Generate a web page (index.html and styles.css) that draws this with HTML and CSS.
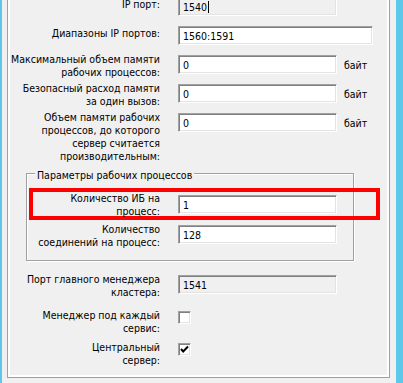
FILE: index.html
```html
<!DOCTYPE html>
<html lang="ru">
<head>
<meta charset="utf-8">
<link rel="stylesheet" href="styles.css">
</head>
<body>
<div class="strip-left"></div>
<div class="panel">
  <div class="form">
    <div class="row">
      <div class="label single">IP порт:</div>
      <div class="tb tb-disabled"><span class="caret-text">1540</span></div>
    </div>
    <div class="row">
      <div class="label single">Диапазоны IP портов:</div>
      <div class="tb tb-wide">1560:1591</div>
    </div>
    <div class="row">
      <div class="label">Максимальный объем памяти<br>рабочих процессов:</div>
      <div class="tb">0</div>
      <div class="unit">байт</div>
    </div>
    <div class="row">
      <div class="label">Безопасный расход памяти<br>за один вызов:</div>
      <div class="tb">0</div>
      <div class="unit">байт</div>
    </div>
    <div class="row">
      <div class="label">Объем памяти рабочих<br>процессов, до которого<br>сервер считается<br>производительным:</div>
      <div class="tb">0</div>
      <div class="unit">байт</div>
    </div>
    <fieldset class="group">
      <legend class="group-title">Параметры рабочих процессов</legend>
      <div class="row grow hl">
        <div class="label">Количество ИБ на<br>процесс:</div>
        <div class="tb">1</div>
      </div>
      <div class="row grow conn">
        <div class="label">Количество<br>соединений на процесс:</div>
        <div class="tb">128</div>
      </div>
    </fieldset>
    <div class="row master">
      <div class="label">Порт главного менеджера<br>кластера:</div>
      <div class="tb tb-disabled">1541</div>
    </div>
    <div class="row cbrow">
      <div class="label">Менеджер под каждый<br>сервис:</div>
      <div class="cb"></div>
    </div>
    <div class="row cbrow">
      <div class="label">Центральный<br>сервер:</div>
      <div class="cb"><svg width="9" height="9" viewBox="0 0 9 9"><polyline points="1,4 3.2,6.5 8,1.5" fill="none" stroke="#000" stroke-width="2"/></svg></div>
    </div>
  </div>
</div>
<div class="strip-right"></div>
</body>
</html>
```
FILE: styles.css
```css
html, body {
  margin: 0;
  padding: 0;
}
body {
  height: 383px;
  overflow: hidden;
  background: #f0f0f0;
  display: flex;
  align-items: flex-start;
  font-family: "DejaVu Sans Condensed", "Liberation Sans", Arial, sans-serif;
  font-size: 10.5px;
  color: #000;
}
.strip-left {
  width: 2px;
  height: 383px;
  background: #5ec8ea;
  flex: none;
}
.strip-right {
  width: 7px;
  height: 383px;
  background: #5ec8ea;
  flex: none;
}
.panel {
  flex: none;
  box-sizing: border-box;
  width: 383px;
  height: 378px;
  margin: 0 6px 0 5px;
  border: 1px solid #a0a0a0;
  border-top: none;
  box-shadow: inset 2px 0 #fff, inset -2px 0 #fff, inset 0 -2px #fff;
  overflow: hidden;
}
.form {
  margin-top: -3px;
  padding-left: 2px;
}
.row {
  display: flex;
  align-items: flex-start;
  min-height: 29px;
}
.label {
  width: 150px;
  flex: none;
  text-align: right;
  line-height: 13px;
  white-space: nowrap;
  margin-top: -2px;
  margin-right: 18px;
}
.label.single {
  margin-top: 1px;
}
.tb {
  box-sizing: border-box;
  width: 159px;
  height: 19px;
  flex: none;
  background: #fff;
  border-style: solid;
  border-width: 1px;
  border-color: #a0a0a0 #fff #fff #a0a0a0;
  box-shadow: inset 1px 1px 0 #808080, inset -1px -1px 0 #e3e3e3;
  padding: 3px 0 0 4px;
  line-height: 13px;
  white-space: nowrap;
}
.tb-wide {
  width: 195px;
}
.tb-disabled {
  background: #f0f0f0;
}
.caret-text {
  border-right: 1px solid #000;
  padding-right: 1px;
}
.unit {
  margin-left: 7px;
  line-height: 13px;
  padding-top: 4px;
}
.group {
  box-sizing: border-box;
  width: 328px;
  margin: 2px 0 0 16px;
  padding: 6px 0 9px 2px;
  border: 1px solid #a0a0a0;
  box-shadow: inset 1px 1px 0 #fff, 1px 1px 0 #fff;
  min-width: 0;
}
.group-title {
  margin-left: 6px;
  padding: 4px 2px 0 2px;
  line-height: 13px;
  background: #f0f0f0;
}
.grow {
  min-height: 0;
}
.grow .label {
  width: 127px;
}
.hl {
  box-sizing: border-box;
  width: 351px;
  height: 32px;
  border: 4px solid #ff0000;
  padding-top: 3px;
}
.hl .label {
  margin-top: -3px;
}
.conn {
  padding-left: 4px;
  margin-top: 5px;
  min-height: 26px;
}
.master {
  margin-top: 14px;
  min-height: 36px;
}
.cbrow {
  min-height: 32px;
}
.cb {
  box-sizing: border-box;
  width: 13px;
  height: 13px;
  flex: none;
  background: #fff;
  border-style: solid;
  border-width: 1px;
  border-color: #a0a0a0 #fff #fff #a0a0a0;
  box-shadow: inset 1px 1px 0 #808080, inset -1px -1px 0 #e3e3e3;
  display: flex;
  align-items: center;
  justify-content: center;
}
.cb svg {
  display: block;
}
```
